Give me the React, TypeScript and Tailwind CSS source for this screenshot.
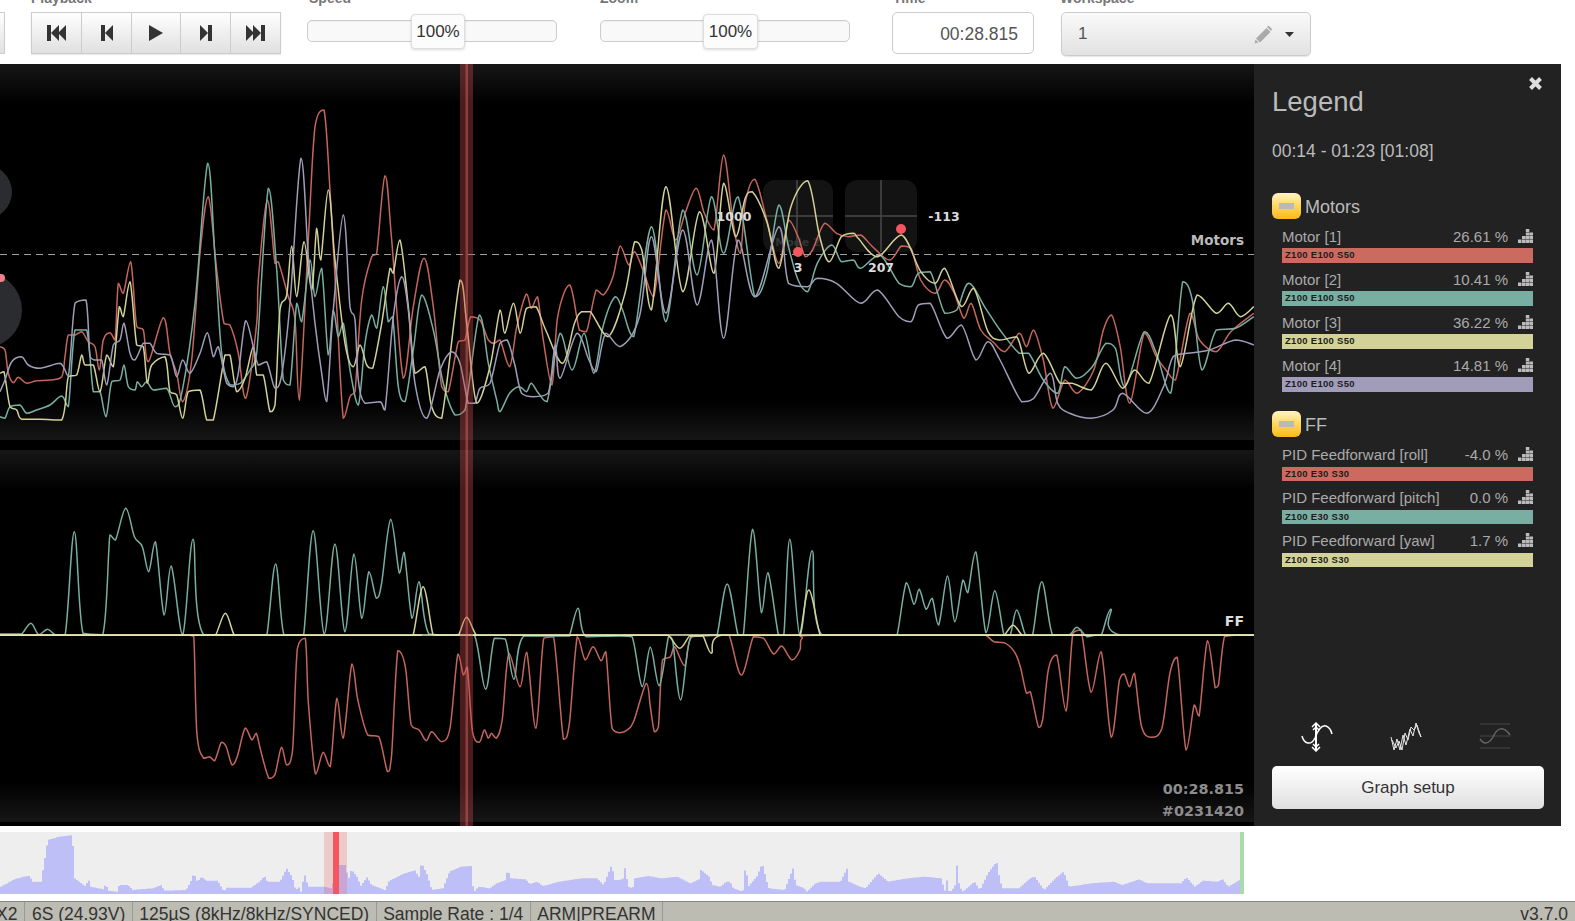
// Blackbox log viewer: toolbar, two graph lanes, legend, seek bar, status bar.
import React from "react";

type Pt = [number, number];

// Traces were read off the reference crops, so each block has its own scale.
const pts = (a: number[], ox: number, sx: number, oy: number): Pt[] => {
  const out: Pt[] = [];
  for (let i = 0; i < a.length; i += 2) out.push([ox + a[i] / sx, oy + a[i + 1] / 3]);
  return out;
};
const joinPts = (...parts: Pt[][]): Pt[] => {
  const out: Pt[] = [];
  parts.flat().forEach((p) => {
    if (!out.length || p[0] > out[out.length - 1][0]) out.push(p);
  });
  return out;
};
const clamp = (v: number, a: number, b: number) => Math.min(Math.max(a, b), Math.max(Math.min(a, b), v));
// Catmull-Rom, with control points held inside each segment so peaks don't overshoot.
const smooth = (p: Pt[]) => {
  let d = `M${p[0][0].toFixed(1)} ${p[0][1].toFixed(1)}`;
  for (let i = 0; i < p.length - 1; i++) {
    const a = p[Math.max(i - 1, 0)], b = p[i], c = p[i + 1], e = p[Math.min(i + 2, p.length - 1)];
    const k = 0.17;
    const y1 = clamp(b[1] + (c[1] - a[1]) * k, b[1], c[1]);
    const y2 = clamp(c[1] - (e[1] - b[1]) * k, b[1], c[1]);
    d += `C${(b[0] + (c[0] - a[0]) * k).toFixed(1)} ${y1.toFixed(1)} ${(c[0] - (e[0] - b[0]) * k).toFixed(1)} ${y2.toFixed(1)} ${c[0].toFixed(1)} ${c[1].toFixed(1)}`;
  }
  return d;
};
const top = (a: number[], b: number[]) => smooth(joinPts(pts(a, 0, 3, 90), pts(b, 500, 2.08, 140)));
const low = (a: number[], b: number[]) => smooth(joinPts(pts(a, 0, 2.529, 490), pts(b, 620, 2.473, 520)));

const M_RED = top(
  [0,770,15,780,25,850,40,878,55,862,80,880,110,872,150,870,185,860,195,800,205,735,225,735,245,725,265,755,285,770,298,840,310,750,330,728,345,750,355,580,370,610,392,515,410,710,430,720,445,815,490,683,510,790,530,850,548,935,575,810,600,490,625,320,650,540,672,700,690,705,715,790,737,925,770,700,775,570,802,330,825,520,835,515,865,620,885,690,898,930,925,450,945,110,972,60,990,300,1010,650,1030,985,1050,920,1065,905,1085,630,1115,500,1130,490,1155,257,1175,450,1210,865,1240,650,1272,505,1300,650,1325,890,1345,905,1375,755,1395,750,1412,680,1440,690,1465,750,1482,760],
  [0,600,20,680,35,560,55,462,65,505,78,470,90,600,108,735,120,530,145,435,165,570,180,575,200,450,215,465,235,410,250,318,268,375,280,335,300,400,320,470,345,210,365,300,385,220,408,145,425,220,445,270,465,45,485,250,500,340,510,190,530,118,555,240,580,370,600,240,620,290,635,350,650,330,675,250,700,280,725,290,750,285,775,320,810,360,835,318,855,325,875,420,905,460,925,420,945,460,965,535,980,490,1000,570,1025,605,1050,635,1080,580,1095,620,1110,570,1130,660,1150,805,1175,720,1200,760,1235,690,1255,570,1272,525,1290,620,1310,790,1340,580,1365,650,1385,690,1405,720,1435,520,1455,600,1490,635,1520,575,1568,520],
);
const M_TEAL = top(
  [0,980,15,985,30,950,60,945,80,970,110,960,150,945,185,918,205,950,225,720,260,720,280,905,300,905,318,980,335,875,360,870,372,825,385,890,405,900,412,875,425,890,440,875,460,900,500,895,525,950,548,895,585,640,623,220,645,500,665,790,690,885,720,880,750,840,770,790,805,295,830,540,850,870,870,885,890,640,905,695,930,510,945,620,965,535,985,795,1000,660,1015,740,1030,700,1050,840,1075,945,1095,760,1115,675,1130,715,1150,590,1165,695,1178,680,1195,890,1215,935,1240,780,1265,615,1300,720,1330,880,1365,975,1395,960,1438,675,1465,820,1490,930],
  [0,815,20,760,40,740,55,755,65,730,80,760,98,785,125,580,150,690,175,580,195,700,215,555,240,470,255,510,278,590,315,260,345,545,380,210,410,405,440,170,465,340,495,170,530,470,555,400,580,195,600,320,620,420,640,455,660,370,690,315,710,365,735,360,750,385,790,345,830,430,855,440,870,400,895,395,925,520,950,510,975,430,1010,505,1040,570,1080,640,1100,640,1130,720,1160,760,1175,680,1200,715,1232,680,1260,610,1280,625,1300,740,1340,575,1365,640,1395,760,1420,425,1440,480,1460,690,1490,570,1530,565,1568,530],
);
const M_YEL = top(
  [0,850,12,845,30,950,50,960,65,988,120,988,185,990,205,860,230,855,245,795,255,825,280,825,300,905,320,795,340,830,358,650,370,680,390,575,410,765,430,770,442,880,455,825,495,800,510,905,530,915,548,985,565,905,600,900,620,990,640,990,675,795,690,795,710,905,735,865,760,770,770,855,790,855,810,965,825,945,840,660,860,615,875,468,890,620,912,455,935,600,950,415,962,510,985,300,1005,510,1035,760,1060,830,1080,765,1100,825,1118,835,1145,700,1170,535,1180,550,1200,450,1225,650,1245,850,1275,830,1295,950,1325,985,1380,570,1400,700,1430,940,1470,830],
  [0,510,10,580,28,490,42,580,55,505,75,500,95,570,130,670,155,550,170,515,188,515,225,590,260,460,280,305,295,330,315,510,345,140,380,455,415,215,445,400,465,130,490,290,510,175,525,155,555,245,580,385,605,200,640,122,665,290,685,365,710,290,735,280,745,295,785,350,835,285,875,395,905,430,925,385,960,500,985,445,1015,575,1040,600,1075,590,1100,700,1130,640,1165,730,1190,730,1230,750,1260,670,1295,745,1320,690,1350,730,1395,525,1415,680,1450,465,1490,520,1515,490,1540,530,1568,500],
);
const M_PUR = top(
  [0,905,15,870,35,815,65,800,85,825,120,835,180,820,205,858,225,640,258,630,270,800,285,810,305,810,320,885,340,765,360,750,372,700,390,790,405,810,430,760,450,760,470,790,510,795,530,860,548,810,570,850,600,790,622,728,640,800,655,770,680,880,700,890,715,850,737,692,760,770,775,825,800,815,825,895,845,855,870,640,903,205,925,500,945,700,965,850,980,935,1000,660,1030,375,1050,650,1065,690,1075,870,1095,940,1140,935,1155,960,1180,680,1205,560,1225,660,1245,880,1280,985,1320,840,1355,785,1380,820,1405,940,1425,940,1440,895,1470,880],
  [0,610,15,600,30,670,45,760,70,770,100,760,115,615,125,715,160,580,185,660,200,695,220,580,250,620,290,530,315,290,345,520,380,270,410,495,440,300,465,595,495,300,530,470,580,260,600,430,640,440,660,415,700,430,750,490,785,450,830,530,855,545,870,495,895,490,930,595,960,555,990,660,1015,605,1040,660,1085,785,1110,775,1145,700,1160,790,1185,820,1230,835,1275,810,1295,760,1345,820,1380,740,1400,650,1430,640,1475,630,1530,600,1568,615],
);
const F_TEAL = low(
  [0,432,40,432,55,432,78,400,98,434,120,418,140,434,165,434,188,125,210,430,260,434,278,135,292,150,318,55,340,140,360,170,376,245,393,155,415,375,433,228,462,434,488,148,515,434,660,434,675,434,697,222,718,434,755,434,768,434,792,122,820,432,847,162,872,425,895,192,915,385,933,245,952,325,965,280,988,88,1010,250,1022,187,1042,385,1060,275,1085,432,1160,436,1200,436,1228,598,1250,445,1278,447,1300,568,1325,438,1430,438,1440,438,1462,355,1482,440],
  [0,348,30,350,55,500,75,382,97,497,120,350,130,360,150,540,175,350,225,346,240,346,265,192,292,346,305,346,328,28,350,278,366,158,392,346,405,346,420,58,445,346,475,92,500,346,670,346,685,346,708,188,727,253,740,208,757,268,772,235,788,315,810,168,828,305,848,180,860,218,880,95,905,338,927,212,950,346,965,346,981,270,1003,346,1020,346,1043,185,1070,346,1110,346,1130,322,1155,350,1175,346,1190,346,1214,268,1240,346,1568,346],
);
const F_RED = low(
  [0,436,470,436,480,436,490,440,498,730,515,805,530,800,543,812,560,757,572,770,587,825,600,800,620,714,637,750,648,730,660,785,680,865,695,855,712,772,725,825,740,780,752,475,772,445,780,640,798,852,817,787,835,830,852,625,868,745,890,522,905,630,930,735,958,740,980,845,990,800,1006,482,1025,530,1040,705,1060,720,1078,752,1092,725,1117,755,1138,715,1158,492,1172,555,1182,532,1195,725,1212,757,1225,720,1235,745,1243,730,1255,745,1270,690,1287,490,1315,590,1332,487,1355,715,1375,445,1400,440,1425,748,1440,700,1460,440,1480,510,1500,470,1520,512,1532,485,1548,715],
  [0,638,20,628,35,600,65,490,75,560,85,635,95,620,105,420,125,410,135,380,160,437,178,350,250,346,270,346,300,465,330,350,355,355,380,402,400,378,425,420,445,390,450,355,490,346,890,346,905,346,925,365,950,368,975,395,990,440,1005,520,1015,515,1035,622,1045,600,1060,445,1080,405,1103,573,1120,340,1140,330,1165,517,1190,395,1215,652,1235,480,1247,462,1260,500,1272,460,1290,620,1315,652,1340,625,1360,460,1378,412,1400,690,1420,555,1432,588,1453,362,1472,503,1480,495,1495,350,1520,346,1568,346],
);
const F_YEL = low(
  [0,436,530,436,545,436,570,370,592,434,610,436,1030,436,1045,434,1070,290,1095,434,1110,436,1145,436,1160,434,1180,382,1205,436,1230,436],
  [0,346,105,346,120,346,148,385,172,348,190,348,205,348,226,400,250,346,430,346,445,346,467,210,495,346,510,346,935,346,950,346,972,316,995,346,1010,346,1568,346],
);

const HIST_A = [0,200,30,178,50,170,65,168,70,185,90,185,105,60,130,50,160,45,165,175,180,190,190,200,196,175,200,200,230,208,235,190,240,212,260,215,265,195,285,195,295,210,340,205,360,195,365,212,415,210,425,185,432,160,440,185,450,170,460,182,485,182,500,215,505,203,560,203,580,185,590,168,597,185,625,185,640,145,652,170,660,210,670,200,672,215,680,162,688,200,725,200,740,205,757,135,772,135,778,180,785,148,800,175,805,200,820,172,830,195,860,210,870,182,900,162,930,150,935,180,942,128,955,165,965,210,990,205,1005,155,1030,140,1055,138,1058,218,1070,200,1095,205,1110,190,1130,180,1135,148,1142,175,1175,178,1185,192,1200,185,1215,198,1250,185,1300,175,1335,175,1350,195,1368,135,1375,180,1385,180,1395,175,1398,142,1405,200,1415,205,1420,175,1450,168,1480,175,1515,170,1545,190,1568,175];
const HIST_B = [0,150,15,170,20,195,35,200,45,185,52,185,58,205,75,215,80,133,85,200,100,170,110,130,118,185,122,205,150,210,165,145,170,195,185,205,190,215,205,190,215,185,250,185,262,145,265,185,285,200,295,205,310,175,318,160,335,185,370,175,400,170,430,175,438,215,439,165,445,218,455,200,458,125,463,200,470,215,480,200,490,185,500,210,515,158,530,125,535,175,540,205,570,205,590,175,598,170,615,210,635,175,650,155,660,200,700,190,740,185,755,195,785,178,800,190,860,190,870,172,885,200,900,182,925,185,935,178,945,200,965,180,970,205,975,222];
// The seek bar's histogram is blocky: sample the outline into 2px columns.
const histPoints = () => {
  const p = [...pts(HIST_A, 0, 2.24, 0), ...pts(HIST_B, 700, 1.792, 0)];
  const out: string[] = ["0,62"];
  let j = 0;
  for (let x = 0; x < 1244; x += 2) {
    while (j < p.length - 2 && p[j + 1][0] < x) j++;
    const [x0, y0] = p[j], [x1, y1] = p[j + 1];
    const t = x1 > x0 ? Math.min(1, Math.max(0, (x - x0) / (x1 - x0))) : 0;
    const y = (y0 + (y1 - y0) * t - 12).toFixed(1);
    out.push(`${x},${y}`, `${x + 2},${y}`);
  }
  out.push("1244,62");
  return out.join(" ");
};

const RED = "#c4665c";
const TEAL = "#78afa3";
const YEL = "#d2d295";
const PUR = "#a09db9";

const Glyph = ({ children, w = 20 }: { children: React.ReactNode; w?: number }) => (
  <svg width={w} height="16" viewBox={`0 0 ${w} 16`} fill="#333">{children}</svg>
);

const transport = [
  <Glyph key="a"><rect x="0" y="0" width="4" height="16" /><path d="M4 8 12 0V16ZM11 8 19 0V16Z" /></Glyph>,
  <Glyph key="b" w={12}><rect x="0" y="0" width="4" height="16" /><path d="M4 8 12 0V16Z" /></Glyph>,
  <Glyph key="c" w={14}><path d="M0 0 14 8 0 16Z" /></Glyph>,
  <Glyph key="d" w={12}><path d="M0 0 8 8 0 16Z" /><rect x="8" y="0" width="4" height="16" /></Glyph>,
  <Glyph key="e"><path d="M0 0 8 8 0 16ZM7 0 15 8 7 16Z" /><rect x="15" y="0" width="4" height="16" /></Glyph>,
];

const Label = ({ children }: { children: React.ReactNode }) => (
  <div className="h-[21px] text-[14px] leading-[14px] font-bold text-[#777]">{children}</div>
);

const Slider = ({ handle }: { handle: string }) => (
  <div className="relative mt-2 h-[22px] w-[250px] rounded-[5px] border border-[#ccc] bg-[#f9f9f9] shadow-[inset_0_1px_1px_rgba(0,0,0,0.04)]">
    <div className={`absolute top-[-7px] flex h-[35px] items-center justify-center rounded-[4px] border border-[#ddd] bg-[#fcfcfc] text-[17px] text-[#333] shadow-[0_1px_3px_rgba(0,0,0,0.15)] ${handle}`}>
      100%
    </div>
  </div>
);

const Toolbar = () => (
  <div className="h-16 shrink-0 overflow-hidden bg-white">
    <div className="-mt-[9px] flex items-start">
      <div className="w-[5px]">
        <Label>&nbsp;</Label>
        <div className="h-[42px] border border-l-0 border-[#ccc] bg-gradient-to-b from-white to-[#e0e0e0]" />
      </div>
      <div className="ml-[26px] w-[250px]">
        <Label>Playback</Label>
        <div className="flex h-[42px] border border-[#ccc] shadow-[0_1px_1px_rgba(0,0,0,0.08)]">
          {transport.map((icon, i) => (
            <div key={i} className="flex flex-1 items-center justify-center border-l border-[#ccc] bg-gradient-to-b from-white to-[#e0e0e0] pl-px first:border-l-0">
              {icon}
            </div>
          ))}
        </div>
      </div>
      <div className="ml-[26px] w-[250px]">
        <Label><span className="pl-[2px]">Speed</span></Label>
        <Slider handle="left-[103px] w-[54px]" />
      </div>
      <div className="ml-[43px] w-[250px]">
        <Label>Zoom</Label>
        <Slider handle="left-[102px] w-[55px]" />
      </div>
      <div className="ml-[42px] w-[142px]">
        <Label><span className="pl-px">Time</span></Label>
        <div className="flex h-[42px] items-center justify-end rounded-[5px] border border-[#ccc] bg-white pr-[15px] pt-[2px] text-[17.500px] text-[#555]">
          00:28.815
        </div>
      </div>
      <div className="ml-[27px] w-[250px]">
        <Label><span className="-ml-px">Workspace</span></Label>
        <div className="flex h-[44px] items-center rounded-[5px] border border-[#ccc] bg-gradient-to-b from-[#fafafa] to-[#e2e2e2] pl-4 pr-4 text-[17px] text-[#555] shadow-[0_1px_1px_rgba(0,0,0,0.1)]">
          <span className="flex-1">1</span>
          <svg width="20" height="20" viewBox="0 0 20 20" fill="#aaa" className="mr-[11px]">
            <path d="M14.5 1.5 18 5 17 7 13 3ZM12.5 4 16.5 8 6 18.5 2 14.5ZM1.5 15.5 4.500 18.500 0.500 19.500Z" />
          </svg>
          <svg width="9" height="5" viewBox="0 0 9 5" fill="#333"><path d="M0 0H9L4.500 5Z" /></svg>
        </div>
      </div>
    </div>
  </div>
);

const Graphs = () => (
  <div className="h-[762px] w-[1254px] shrink-0 bg-black">
    <svg width="1254" height="762" viewBox="0 64 1254 762" className="block">
      <defs>
        <linearGradient id="laneTop" x1="0" y1="0" x2="0" y2="1">
          <stop offset="0" stopColor="#161616" />
          <stop offset="1" stopColor="#000" />
        </linearGradient>
        <linearGradient id="laneBot" x1="0" y1="0" x2="0" y2="1">
          <stop offset="0" stopColor="#000" />
          <stop offset="1" stopColor="#161616" />
        </linearGradient>
      </defs>
      <rect x="0" y="64" width="1254" height="40" fill="url(#laneTop)" />
      <rect x="0" y="400" width="1254" height="40" fill="url(#laneBot)" />
      <rect x="0" y="450" width="1254" height="40" fill="url(#laneTop)" />
      <rect x="0" y="782" width="1254" height="40" fill="url(#laneBot)" />

      {/* stick overlays */}
      <circle cx="-15" cy="192" r="27" fill="#2b2c2f" />
      <circle cx="-16" cy="310" r="38" fill="#2b2c2f" />
      <circle cx="1" cy="278" r="4" fill="#f08088" />
      <rect x="763" y="180" width="70" height="72" rx="12" fill="#131313" />
      <rect x="845" y="180" width="72" height="72" rx="12" fill="#131313" />
      <path d="M763 216H833M797 180V252M845 216H917M881 180V252" stroke="#4a4a4a" strokeWidth="1.5" />
      <text x="798" y="246" textAnchor="middle" fontSize="11" fill="#333" className="font-['DejaVu_Sans',sans-serif] font-bold">Mode 2</text>

      <g fill="none" strokeWidth="1.5" strokeLinejoin="round">
        <path d={M_RED} stroke={RED} />
        <path d={M_TEAL} stroke={TEAL} />
        <path d={M_YEL} stroke={YEL} />
        <path d={M_PUR} stroke={PUR} />
        <path d={F_RED} stroke={RED} />
        <path d={F_TEAL} stroke={TEAL} />
        <path d={F_YEL} stroke={YEL} />
      </g>
      <path d="M0 635H1254" stroke="#ecebb8" strokeWidth="1.4" />
      <path d="M0 254.500H1254" stroke="#9f9f9f" strokeWidth="1" strokeDasharray="7 5" />

      <circle cx="798" cy="252" r="5" fill="#f4555f" />
      <circle cx="901" cy="229" r="5" fill="#f4555f" />
      <g fontSize="12.500" fill="#dcdcdc" textAnchor="middle" className="font-['DejaVu_Sans',sans-serif] font-bold">
        <text x="734" y="221">1000</text>
        <text x="944" y="221">-113</text>
        <text x="798" y="272">3</text>
        <text x="881" y="272">207</text>
      </g>
      <g textAnchor="end" className="font-['DejaVu_Sans',sans-serif] font-bold">
        <text x="1244" y="245" fontSize="13.500" fill="#bbb">Motors</text>
        <text x="1244" y="626" fontSize="14" fill="#ddd">FF</text>
        <text x="1244" y="794" fontSize="14.400" fill="#8c8c8c">00:28.815</text>
        <text x="1244" y="816" fontSize="14.400" fill="#8c8c8c">#0231420</text>
      </g>

      {/* cursor */}
      <rect x="460" y="64" width="13" height="762" fill="#c84646" fillOpacity="0.38" />
      <rect x="465.500" y="64" width="2.500" height="762" fill="#e87878" fillOpacity="0.4" />
    </svg>
  </div>
);

const StepIcon = () => (
  <svg width="15" height="14" viewBox="0 0 15 14" fill="#bbb" className="-mt-[3px]">
    <path d="M0 10.500h3.500v3.500H0zM4 10.500h3.500v3.500H4zM7.800 10.500h3.500v3.500H7.800zM11.500 10.500h3.500v3.500h-3.500zM4 7h3.500v3H4zM7.800 7h3.500v3H7.800zM11.500 7h3.500v3h-3.500zM7.800 3.500h3.500v3H7.800zM11.500 3.500h3.500v3h-3.500zM7.800 0h3.500v3H7.800z" />
  </svg>
);

const MinusButton = () => (
  <div className="flex h-[26px] w-[29px] items-center justify-center rounded-[6px] bg-gradient-to-b from-[#fff3c4] via-[#ffd659] to-[#fdb90e]">
    <div className="h-[6px] w-[15px] bg-[#b9b9b9]" />
  </div>
);

type Row = { name: string; val: string; bar: string };

const LegendGroup = ({ title, tag, rows, tall }: { title: string; tag: string; rows: Row[]; tall?: boolean }) => (
  <div>
    <div className="flex h-[26px] items-center gap-1 text-[18px] text-[#bbb]">
      <MinusButton />
      <span className="pt-[2px]">{title}</span>
    </div>
    <div className={`${tall ? "mt-[3px]" : "mt-1"} pl-[10px] pr-[11px]`}>
      {rows.map((r) => (
        <div key={r.name} className="h-[43px]">
          <div className={`flex h-[26px] items-center ${tall ? "pt-1" : "pt-[2px]"} text-[15px] text-[#aaa]`}>
            <span className="flex-1">{r.name}</span>
            <span className="mr-[10px]">{r.val}</span>
            <StepIcon />
          </div>
          <div className={`${tall ? "h-[15px]" : "h-[14px]"} pl-[3px] text-[9.500px] font-bold leading-[14px] tracking-[0.3px] text-[#1c1c1c] ${r.bar}`}>
            {tag}
          </div>
        </div>
      ))}
    </div>
  </div>
);

const Legend = () => (
  <div className="flex h-[762px] w-[307px] shrink-0 flex-col bg-[#222] pl-[18px] pr-[17px]">
    <div className="relative h-[129px] shrink-0 text-[#bbb]">
      <svg width="15" height="15" viewBox="0 0 15 15" className="absolute right-0 top-[12px] mr-[1px]">
        <path d="M2.500 2.500 12.500 12.500M12.500 2.500 2.500 12.500" stroke="#ddd" strokeWidth="4" />
      </svg>
      <div className="pt-[19px] text-[27.500px] leading-[38px]">Legend</div>
      <div className="mt-[18px] text-[17.500px] leading-[24px]">00:14 - 01:23 [01:08]</div>
    </div>
    <LegendGroup
      title="Motors"
      tag="Z100 E100 S50"
      tall
      rows={[
        { name: "Motor [1]", val: "26.61 %", bar: "bg-[#cd6a60]" },
        { name: "Motor [2]", val: "10.41 %", bar: "bg-[#79aea3]" },
        { name: "Motor [3]", val: "36.22 %", bar: "bg-[#d3d399]" },
        { name: "Motor [4]", val: "14.81 %", bar: "bg-[#a19cba]" },
      ]}
    />
    <div className="mt-[17px]">
      <LegendGroup
        title="FF"
        tag="Z100 E30 S30"
        rows={[
          { name: "PID Feedforward [roll]", val: "-4.0 %", bar: "bg-[#cd6a60]" },
          { name: "PID Feedforward [pitch]", val: "0.0 %", bar: "bg-[#79aea3]" },
          { name: "PID Feedforward [yaw]", val: "1.7 %", bar: "bg-[#d3d399]" },
        ]}
      />
    </div>
    <div className="mt-auto flex items-center gap-[57px] pl-[29px]">
      <svg width="32" height="30" viewBox="0 0 32 30" fill="none" stroke="#fff" strokeWidth="1.500">
        <path d="M1 14C3 22 10 24 14 16 17 8 21 3 25 4 28 5 30 8 31 12" />
        <path d="M15 1V29" strokeWidth="2" />
        <path d="M11 5 15 1 19 5M12 8 15 5 18 8M11 25 15 29 19 25M12 22 15 25 18 22" />
      </svg>
      <svg width="32" height="30" viewBox="0 0 32 30" fill="none" stroke="#e8e8e8" strokeWidth="1">
        <path d="M1 15 4 28 7 17 10 28 13 13 16 23 20 7 23 14 26 1 29 11 31 15" />
        <path d="M2 18 6 26 9 19 12 28 15 11 18 18 21 5 24 8 27 3 30 12 31 15" />
      </svg>
      <svg width="32" height="26" viewBox="0 0 32 26" fill="none" stroke="#444" strokeWidth="1" className="-mt-[2px]">
        <path d="M1 1H31M1 13H31M1 25H31" />
        <path d="M1 16C5 22 10 21 14 14 18 5 24 2 31 12" stroke="#666" strokeWidth="1.500" />
      </svg>
    </div>
    <div className="mb-[17px] mt-[14px] flex h-[43px] w-[272px] shrink-0 items-center justify-center rounded-[5px] bg-gradient-to-b from-white to-[#e0e0e0] text-[17px] text-[#333]">
      Graph setup
    </div>
  </div>
);

const SeekBar = () => (
  <div className="relative mt-[6px] h-[62px] w-[1244px] shrink-0 bg-[#eee]">
    <svg width="1244" height="62" viewBox="0 0 1244 62" className="block">
      <polygon points={histPoints()} fill="#bfbff7" />
    </svg>
    <div className="absolute inset-y-0 left-[324px] w-[23px] bg-[#f04040]/20" />
    <div className="absolute inset-y-0 left-[333px] w-[6px] bg-[#f55660]" />
    <div className="absolute inset-y-0 right-0 w-1 bg-[#a8dca8]" />
  </div>
);

const statusCells = ["6S (24.93V)", "125µS (8kHz/8kHz/SYNCED)", "Sample Rate : 1/4", "ARM|PREARM"];

const StatusBar = () => (
  <div className="mt-[7px] flex h-5 shrink-0 overflow-hidden border-t border-[#888] bg-[#bcbcb3] text-[17.500px] leading-[24px] text-[#333]">
    <div className="-ml-[4px] flex">
      <div className="border-r border-[#999] pl-0 pr-[7px]">X2</div>
      {statusCells.map((c) => (
        <div key={c} className="border-r border-[#999] px-[6.500px] whitespace-nowrap">{c}</div>
      ))}
    </div>
    <div className="ml-auto pr-[7px]">v3.7.0</div>
  </div>
);

export default function App() {
  return (
    <div className="flex h-[921px] w-[1575px] flex-col overflow-hidden bg-white font-['Liberation_Sans',Arial,sans-serif]">
      <Toolbar />
      <div className="flex h-[762px] shrink-0">
        <Graphs />
        <Legend />
      </div>
      <SeekBar />
      <StatusBar />
    </div>
  );
}
